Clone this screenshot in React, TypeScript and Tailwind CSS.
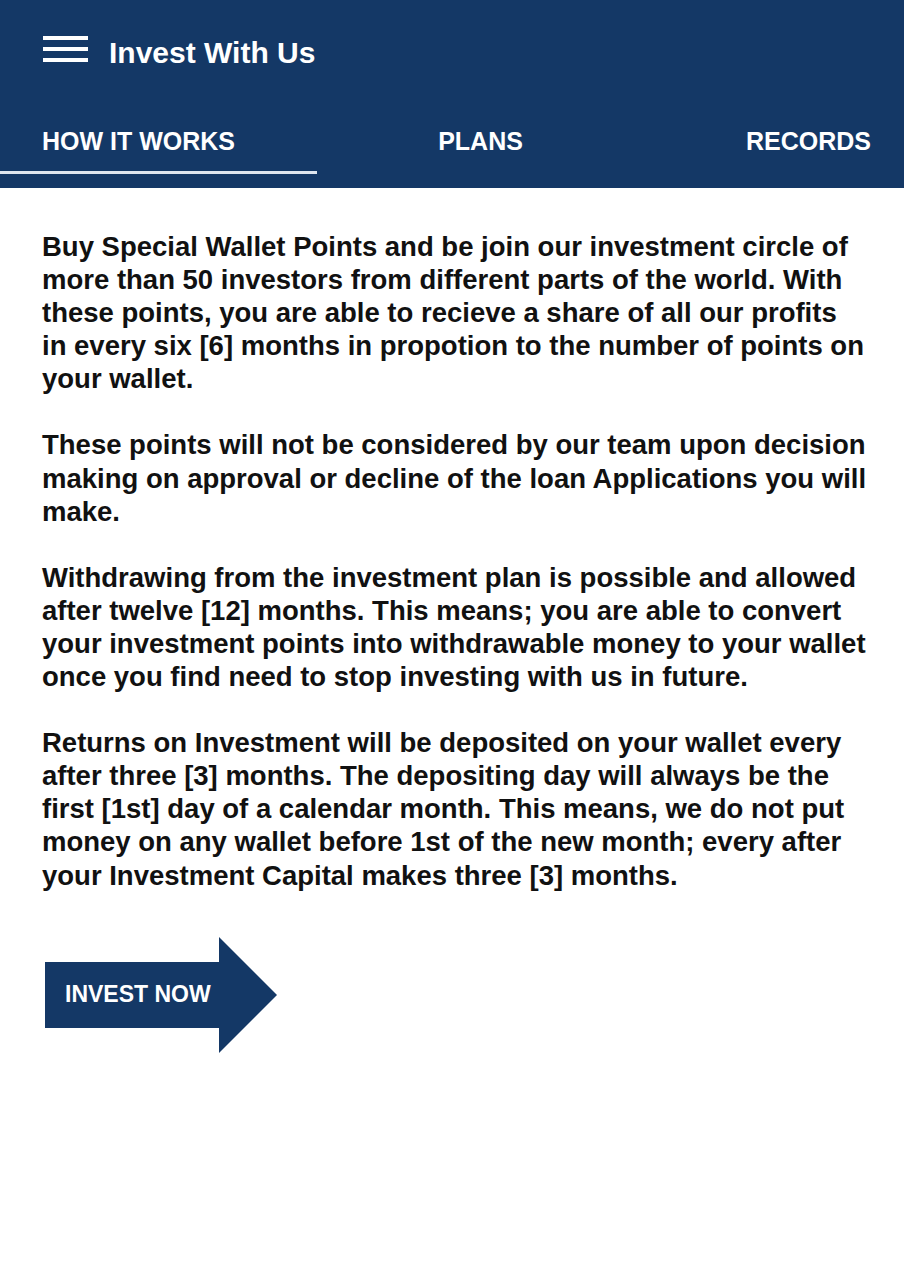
export default function App() {
  return (
    <div className="min-h-[1280px] w-[904px] bg-white font-[family-name:Liberation_Sans,Arial,sans-serif]">
      <header className="h-[188px] bg-[#143866] text-white">
        <div className="flex h-[104px] items-center gap-[21px] pl-[43px]">
          <div className="-mt-[6px] flex w-[45px] flex-col gap-[7px]">
            <span className="h-[4px] bg-white" />
            <span className="h-[4px] bg-white" />
            <span className="h-[4px] bg-white" />
          </div>
          <h1 className="text-[30px] font-bold">Invest With Us</h1>
        </div>
        <nav className="flex h-[70px] text-[25px] font-bold">
          <div className="flex w-[317px] flex-col">
            <div className="flex flex-1 items-center pl-[42px] pt-[9px]">HOW IT WORKS</div>
            <div className="h-[3px] bg-[#dfe6ef]" />
          </div>
          <div className="flex flex-1 items-center justify-center pt-[6px] pr-[102px]">PLANS</div>
          <div className="flex items-center pr-[33px] pt-[6px]">RECORDS</div>
        </nav>
      </header>

      <main className="pl-[42px] pr-[37px] pt-[42px] text-[27.5px] font-bold leading-[33.1px] text-[#111]">
        <p className="mb-[33px]">
          Buy Special Wallet Points and be join our investment circle of more than 50 investors from different parts of the world. With these points, you are able to recieve a share of all our profits in every six [6] months in propotion to the number of points on your wallet.
        </p>
        <p className="mb-[33px]">
          These points will not be considered by our team upon decision making on approval or decline of the loan Applications you will make.
        </p>
        <p className="mb-[33px]">
          Withdrawing from the investment plan is possible and allowed after twelve [12] months. This means; you are able to convert your investment points into withdrawable money to your wallet once you find need to stop investing with us in future.
        </p>
        <p>
          Returns on Investment will be deposited on your wallet every after three [3] months. The depositing day will always be the first [1st] day of a calendar month. This means, we do not put money on any wallet before 1st of the new month; every after your Investment Capital makes three [3] months.
        </p>

        <button className="mt-[45px] ml-[3px] flex items-center">
          <span className="flex h-[66px] w-[175px] items-center bg-[#143866] pl-[20px] text-[23px] font-bold text-white">
            INVEST NOW
          </span>
          <svg width="58" height="116" viewBox="0 0 58 116" className="-ml-[1px]">
            <polygon points="0,0 58,58 0,116" fill="#143866" />
          </svg>
        </button>
      </main>
    </div>
  );
}
